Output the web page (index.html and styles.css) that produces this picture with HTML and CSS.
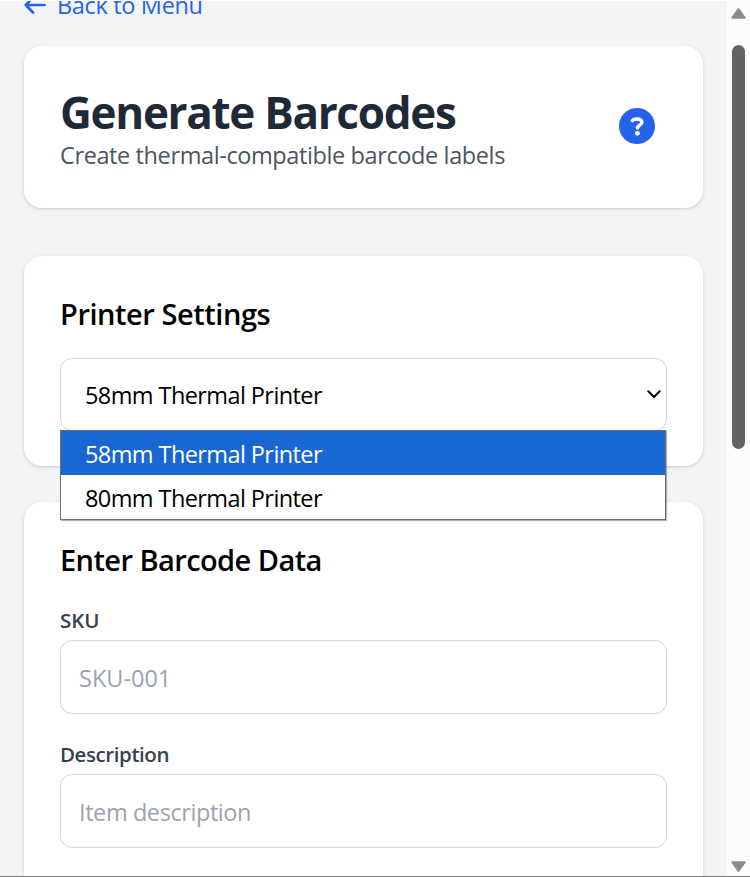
FILE: index.html
```html
<!DOCTYPE html>
<html lang="en">
<head>
<meta charset="utf-8">
<title>Generate Barcodes</title>
<link rel="stylesheet" href="styles.css">
</head>
<body>
<div class="window">
  <main class="page">
    <a class="back"><svg class="back-icon" viewBox="0 0 22 20" width="22" height="20"><path d="M20.5 10H2M9 2.5 1.8 10 9 17.5" fill="none" stroke="currentColor" stroke-width="2.7" stroke-linecap="round" stroke-linejoin="round"/></svg><span class="t-back">Back to Menu</span></a>
    <section class="card header">
      <div>
        <h1><span class="t-title">Generate Barcodes</span></h1>
        <p class="subtitle"><span class="t-sub">Create thermal-compatible barcode labels</span></p>
      </div>
      <button class="help" aria-label="Help"><svg viewBox="0 0 36 36" width="36" height="36"><circle cx="18" cy="18" r="18" fill="#2563eb"/><path d="M13.3 12.6C14.3 11.1 15.5 10.9 18 10.9C20.8 10.9 22.9 12.2 22.9 14.2C22.9 17 18.5 16.9 18.5 20.1" fill="none" stroke="#fff" stroke-width="3.5" stroke-linecap="round" stroke-linejoin="round"/><circle cx="18.4" cy="25.3" r="2.4" fill="#fff"/></svg></button>
    </section>
    <section class="card printer">
      <h2><span class="t-printer">Printer Settings</span></h2>
      <div class="select">
        <span class="t-option">58mm Thermal Printer</span>
        <svg class="chevron" viewBox="0 0 14 9" width="14" height="9"><path d="M1.3 1.3 7 7 12.7 1.3" fill="none" stroke="#000" stroke-width="2.1" stroke-linecap="round"/></svg>
        <ul class="menu">
          <li class="option active"><span class="t-option">58mm Thermal Printer</span></li>
          <li class="option"><span class="t-option">80mm Thermal Printer</span></li>
        </ul>
      </div>
    </section>
    <section class="card data">
      <h2><span class="t-data">Enter Barcode Data</span></h2>
      <div class="field"><label><span class="t-sku">SKU</span></label><div class="input"><span class="t-skuval">SKU-001</span></div></div>
      <div class="field"><label><span class="t-desc">Description</span></label><div class="input"><span class="t-item">Item description</span></div></div>
    </section>
  </main>
  <aside class="scrollbar">
    <svg class="arrow-up" viewBox="0 0 15 11" width="15" height="11"><path d="M7.5 1.2 13.7 9.8H1.3Z" fill="#8b8b8b" stroke="#8b8b8b" stroke-width="2" stroke-linejoin="round"/></svg>
    <div class="thumb"></div>
    <svg class="arrow-down" viewBox="0 0 15 11" width="15" height="11"><path d="M7.5 9.8 1.3 1.2H13.7Z" fill="#8b8b8b" stroke="#8b8b8b" stroke-width="2" stroke-linejoin="round"/></svg>
  </aside>
</div>
</body>
</html>
```
FILE: styles.css
```css
* { box-sizing: border-box; margin: 0; padding: 0; }
body { font-family: "Open Sans", "Noto Sans", sans-serif; font-size: 23.5px; color: #000; background: #f3f4f6; overflow: hidden; }
.window { display: flex; height: 877px; overflow: hidden; border-top: 1px solid #fff; border-bottom: 1px solid #777; }
.page { flex: 1; padding: 0 24px; height: 875px; overflow: hidden; }
.back { display: flex; align-items: center; gap: 11px; height: 36px; margin: -14px 0 23px; color: #2563eb; }
.back-icon { margin-top: -1px; }
.back span { line-height: 38px; }
.card { background: #fff; border-radius: 18px; padding: 36px; box-shadow: 0 1px 4px rgba(0,0,0,.11), 0 1px 2px rgba(0,0,0,.07); }
span { white-space: nowrap; }
.header { height: 162px; display: flex; justify-content: space-between; align-items: flex-start; padding-right: 48px; margin-bottom: 48px; }
h1 { font-size: 44px; font-weight: 700; line-height: 54px; margin-top: 3px; color: #1f2937; }
.subtitle { line-height: 36px; margin-top: -2px; color: #4b5563; }
.help { width: 36px; height: 36px; margin-top: 26px; border: 0; background: none; display: block; }
.help svg, .back-icon { display: block; }
.printer { height: 210px; margin-bottom: 36px; padding-top: 37px; }
h2 { font-size: 29px; font-weight: 600; line-height: 42px; margin-bottom: 23px; }
.select { position: relative; display: flex; align-items: center; justify-content: space-between; height: 73px; border: 1px solid #d1d5db; border-radius: 12px; padding: 0 5px 0 24px; background: #fff; }
.menu { position: absolute; left: -1px; top: 71px; width: 606px; height: 90px; border: 1px solid #707070; background: #fff; list-style: none; box-shadow: 1px 1px 1px rgba(0,0,0,.3); }
.option { height: 44px; line-height: 47px; padding-left: 24px; }
.active { background: #1967d2; color: #fff; }
.data { height: 440px; padding-top: 37px; }
.data h2 { margin-bottom: 21px; }
.field { margin-bottom: 22px; }
label { display: block; height: 38px; font-size: 20.5px; font-weight: 600; line-height: 36px; color: #374151; }
.input { display: flex; align-items: center; height: 74px; border: 1px solid #d1d5db; border-radius: 12px; padding: 2px 18px 0; color: #9ca3af; }
.scrollbar { width: 23px; background: #fcfcfc; display: flex; flex-direction: column; align-items: center; padding: 7px 0 4px; }
.thumb { width: 13px; height: 404px; margin: 26px 0 auto; border-radius: 7px; background: #636363; }
.t-back { letter-spacing: -.34px; }
.t-title { letter-spacing: -1.3px; }
.t-sub { letter-spacing: -.39px; }
.t-printer { letter-spacing: -.45px; }
.t-option { letter-spacing: -.59px; }
.t-data { letter-spacing: -.57px; }
.t-desc { letter-spacing: -.42px; }
.t-item { letter-spacing: -.42px; }
```
